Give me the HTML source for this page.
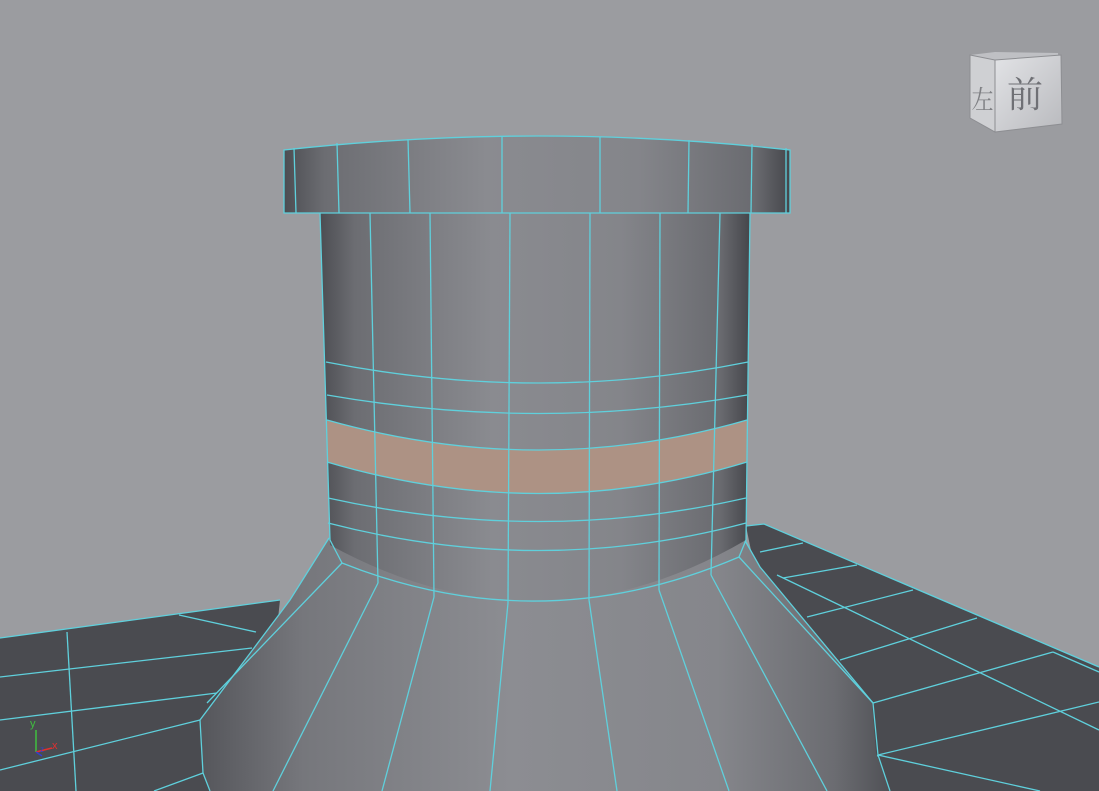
<!DOCTYPE html>
<html><head><meta charset="utf-8"><style>
html,body{margin:0;padding:0;background:#9b9ca0;width:1099px;height:791px;overflow:hidden}
svg{display:block}
</style></head><body>
<svg width="1099" height="791" viewBox="0 0 1099 791" xmlns="http://www.w3.org/2000/svg">
<defs>
<linearGradient id="cyl" x1="0" x2="1" y1="0" y2="0">
<stop offset="0" stop-color="#4c4d52"/><stop offset="0.08" stop-color="#6c6d72"/><stop offset="0.4" stop-color="#8a8b90"/><stop offset="0.7" stop-color="#84858a"/><stop offset="0.93" stop-color="#6a6b70"/><stop offset="1" stop-color="#45464b"/>
</linearGradient>
<linearGradient id="cone" x1="0" x2="1" y1="0" y2="0">
<stop offset="0" stop-color="#55565b"/><stop offset="0.15" stop-color="#76777c"/><stop offset="0.45" stop-color="#8c8d92"/><stop offset="0.75" stop-color="#85868b"/><stop offset="0.92" stop-color="#6b6c71"/><stop offset="1" stop-color="#505156"/>
</linearGradient>
<linearGradient id="cube" x1="0" x2="1" y1="0" y2="1"><stop offset="0" stop-color="#e2e3e6"/><stop offset="1" stop-color="#b9babe"/></linearGradient>
</defs>
<rect width="1099" height="791" fill="#9b9ca0"/>
<!-- floors -->
<polygon points="0,638 280,600 260,791 0,791" fill="#4a4b50"/>
<polygon points="746,526 764,524 1099,667 1099,791 800,791" fill="#4a4b50"/>
<g stroke="#5fd0dc" stroke-width="1.3" fill="none">
<polyline points="0,638 280,600"/>
<polyline points="746,526 764,524 1099,667"/>
<line x1="67" y1="632" x2="76" y2="791"/>
<line x1="179" y1="615" x2="256" y2="632"/>
<line x1="0" y1="677" x2="252" y2="648"/>
<line x1="0" y1="720" x2="217" y2="693"/>
<line x1="0" y1="770" x2="200" y2="720"/>
<line x1="154" y1="791" x2="203" y2="773"/>
<line x1="760" y1="552" x2="803" y2="543"/>
<line x1="783" y1="578" x2="857" y2="565"/>
<line x1="807" y1="617" x2="913" y2="590"/>
<line x1="840" y1="660" x2="977" y2="618"/>
<line x1="873" y1="703" x2="1053" y2="652"/>
<line x1="878" y1="755" x2="1099" y2="702"/>
<line x1="777" y1="575" x2="1099" y2="730"/>
<line x1="878" y1="755" x2="1040" y2="791"/>
<line x1="878" y1="755" x2="853" y2="791"/>
<line x1="1053" y1="652" x2="1099" y2="672"/>
</g>
<!-- cone -->
<path d="M329,538 L290,600 L200,720 L203,773 L210,791 L890,791 L876,753 L872,702 L760,567 L743,537 Z" fill="url(#cone)"/>
<g stroke="#5fd0dc" stroke-width="1.3" fill="none">
<path d="M329,538 L290,600 L200,720 L203,773 L210,791"/>
<path d="M743,537 L760,567 L873,703 L878,755 L890,791"/>
<line x1="342" y1="563" x2="207" y2="703"/>
<line x1="378" y1="583" x2="273" y2="791"/>
<line x1="434" y1="597" x2="382" y2="791"/>
<line x1="508" y1="603" x2="490" y2="791"/>
<line x1="589" y1="600" x2="617" y2="791"/>
<line x1="659" y1="590" x2="729" y2="791"/>
<line x1="711" y1="575" x2="827" y2="791"/>
<line x1="739" y1="557" x2="873" y2="703"/>
</g>
<!-- cylinder -->
<path d="M320,213 L750,213 L746,540 Q540,660 330,545 Z" fill="url(#cyl)"/>
<path d="M327,420 Q540,480 747,420 L747,462 Q540,525 327,462 Z" fill="#ad9284"/>
<g stroke="#5fd0dc" stroke-width="1.3" fill="none">
<path d="M320,213 L330,540 L342,563"/><path d="M750,213 L746,540 L739,557"/>
<path d="M370,213 L378,583"/><path d="M430,213 L434,597"/><path d="M510,213 L508,603"/><path d="M590,213 L589,600"/><path d="M660,213 L659,590"/><path d="M720,213 L711,575"/>
<path d="M326,362 Q540,404 748,362"/>
<path d="M327,395 Q540,432 747,395"/>
<path d="M327,420 Q540,480 747,420"/>
<path d="M327,462 Q540,525 747,462"/>
<path d="M328,498 Q540,545 746,498"/>
<path d="M328,523 Q540,578 746,523"/>
<path d="M342,563 Q540,642 739,557"/>
</g>
<!-- cap -->
<path d="M284,150 Q540,122 790,150 L790,213 L284,213 Z" fill="url(#cyl)"/>
<g stroke="#5fd0dc" stroke-width="1.3" fill="none">
<path d="M284,150 Q540,122 790,150 L790,213 L284,213 Z"/>
<line x1="294" y1="148" x2="296" y2="213"/>
<line x1="337" y1="143" x2="339" y2="213"/>
<line x1="408" y1="139" x2="410" y2="213"/>
<line x1="502" y1="136" x2="502" y2="213"/>
<line x1="600" y1="137" x2="600" y2="213"/>
<line x1="689" y1="140" x2="688" y2="213"/>
<line x1="752" y1="144" x2="751" y2="213"/>
<line x1="786" y1="148" x2="786" y2="213"/>
</g>
<!-- view cube -->
<polygon points="970,55 995,52 1058,53 1062,124 995,132 970,118" fill="#bfc0c4"/>
<polygon points="970,55 995,60 995,132 970,118" fill="#cfd0d3" stroke="#8d8e92"/>
<polygon points="995,60 1061,55 1062,124 995,132" fill="url(#cube)" stroke="#8d8e92"/>
<text x="972" y="109" font-family="'Noto Serif CJK SC','Noto Sans CJK SC',serif" font-size="26" fill="#7f8084" transform="scale(0.85,1) translate(171,0)">左</text>
<text x="1007" y="107" font-family="'Noto Serif CJK SC','Noto Sans CJK SC',serif" font-size="36" fill="#6f7075">前</text>
<!-- axis -->
<line x1="36" y1="730" x2="36" y2="752" stroke="#3fbf3f" stroke-width="1.5"/>
<line x1="36" y1="752" x2="52" y2="748" stroke="#e03030" stroke-width="1.5"/>
<line x1="36" y1="752" x2="42" y2="756" stroke="#3040d0" stroke-width="1.5"/>
<text x="30" y="727" font-family="Liberation Sans,sans-serif" font-size="11" fill="#3fbf3f">y</text>
<text x="52" y="749" font-family="Liberation Sans,sans-serif" font-size="11" fill="#e03030">x</text>
<text x="40" y="752" font-family="Liberation Sans,sans-serif" font-size="8" fill="#3040d0">z</text>
</svg>
</body></html>
